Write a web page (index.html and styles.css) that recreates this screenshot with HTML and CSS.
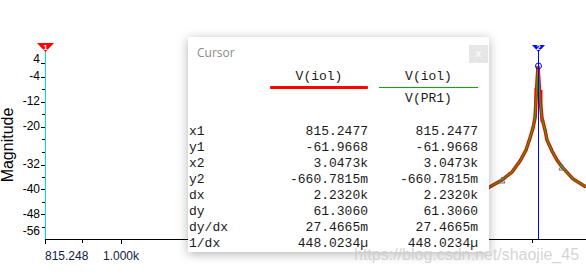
FILE: index.html
```html
<!DOCTYPE html>
<html lang="en">
<head>
    <meta charset="UTF-8">
    <meta name="viewport" content="width=device-width, initial-scale=1.0">
    <title>Cursor</title>
    <link rel="stylesheet" href="styles.css">
</head>
<body>

<div class="scope">
    <svg class="plot" width="586" height="275" viewBox="0 0 586 275">
        <!-- y axis -->
        <text class="axis-title" transform="translate(13,145) rotate(-90)" text-anchor="middle">Magnitude</text>
        <g class="ylabels" text-anchor="end">
            <text x="40" y="63">4</text>
            <text x="40" y="80">-4</text>
            <text x="40" y="105">-12</text>
            <text x="40" y="130">-20</text>
            <text x="40" y="168">-32</text>
            <text x="40" y="193">-40</text>
            <text x="40" y="218">-48</text>
            <text x="40" y="235">-56</text>
        </g>
        <g stroke="#000" stroke-width="1">
            <line x1="41" y1="63.5" x2="45" y2="63.5"/>
            <line x1="41" y1="77.5" x2="45" y2="77.5"/>
            <line x1="42" y1="89.5" x2="45" y2="89.5"/>
            <line x1="41" y1="102.5" x2="45" y2="102.5"/>
            <line x1="42" y1="114.5" x2="45" y2="114.5"/>
            <line x1="41" y1="127.5" x2="45" y2="127.5"/>
            <line x1="42" y1="139.5" x2="45" y2="139.5"/>
            <line x1="42" y1="152.5" x2="45" y2="152.5"/>
            <line x1="41" y1="165.5" x2="45" y2="165.5"/>
            <line x1="42" y1="177.5" x2="45" y2="177.5"/>
            <line x1="41" y1="189.5" x2="45" y2="189.5"/>
            <line x1="42" y1="202.5" x2="45" y2="202.5"/>
            <line x1="41" y1="214.5" x2="45" y2="214.5"/>
            <line x1="42" y1="227.5" x2="45" y2="227.5"/>
            <!-- x axis -->
            <line x1="45" y1="239.5" x2="586" y2="239.5"/>
            <line x1="45.5" y1="239" x2="45.5" y2="244"/>
            <line x1="82.5" y1="239" x2="82.5" y2="243"/>
            <line x1="121.5" y1="239" x2="121.5" y2="244"/>
            <line x1="532.5" y1="239" x2="532.5" y2="243"/>
        </g>
        <g class="xlabels">
            <text x="45" y="260">815.248</text>
            <text x="103" y="260">1.000k</text>
        </g>

        <!-- trace -->
        <polyline class="trace-red" points="486,189 502,180 512,172 520,161 526,150 530,138 533,128 535,118 536,100 537,82 538,66 539,82 540,100 542,118 545,130 547,140 552,151 557,160 562,167 573,179 586,187"/>
        <line class="trace-spike" x1="535.5" y1="88" x2="535.5" y2="118"/>
        <line class="trace-spike" x1="541.5" y1="90" x2="541.5" y2="122"/>
        <polyline class="trace-green" points="486,189 502,180 512,172 520,161 526,150 530,138 533,128 535,118 536,100 537,82 538,66 539,82 540,100 542,118 545,130 547,140 552,151 557,160 562,167 573,179 586,187"/>
        <polygon class="pt" points="499,183 505,183 502,177"/>
        <polygon class="pt" points="559,170 565,170 562,164"/>

        <!-- cursors -->
        <line x1="45.5" y1="50" x2="45.5" y2="239" stroke="#00dede"/>
        <polygon points="37,43 54,43 45.5,52" fill="#f00"/>
        <text class="flag" x="45.5" y="49.5" text-anchor="middle">1</text>

        <line x1="538.5" y1="50" x2="538.5" y2="239" stroke="#00f"/>
        <circle cx="538.5" cy="66" r="3" fill="none" stroke="#00f"/>
        <polygon points="532,45 545,45 538.5,52" fill="#00f"/>
        <text class="flag" x="538.5" y="49.5" text-anchor="middle">2</text>
    </svg>

    <div class="cursor-win">
        <div class="win-head">
            <span class="win-title">Cursor</span>
            <span class="win-close">x</span>
        </div>
        <div class="readout head-row">
            <span></span>
            <div class="trace-col">
                <span>V(iol)</span>
                <span class="bar bar-red"></span>
            </div>
            <div class="trace-col">
                <span>V(iol)</span>
                <span class="bar bar-green"></span>
                <span class="ref">V(PR1)</span>
            </div>
        </div>
        <div class="readout rows">
            <span>x1</span><span class="num">815.2477</span><span class="num">815.2477</span>
            <span>y1</span><span class="num">-61.9668</span><span class="num">-61.9668</span>
            <span>x2</span><span class="num">3.0473k</span><span class="num">3.0473k</span>
            <span>y2</span><span class="num">-660.7815m</span><span class="num">-660.7815m</span>
            <span>dx</span><span class="num">2.2320k</span><span class="num">2.2320k</span>
            <span>dy</span><span class="num">61.3060</span><span class="num">61.3060</span>
            <span>dy/dx</span><span class="num">27.4665m</span><span class="num">27.4665m</span>
            <span>1/dx</span><span class="num">448.0234µ</span><span class="num">448.0234µ</span>
        </div>
    </div>

    <div class="watermark">https://blog.csdn.net/shaojie_45</div>
</div>

</body>
</html>
```

FILE: styles.css
```css
body {
    margin: 0;
    background: #fff;
    font-family: "Liberation Sans", Arial, sans-serif;
}
.scope {
    position: relative;
    width: 586px;
    height: 275px;
    overflow: hidden;
}
.plot {
    display: block;
}
.axis-title {
    font-size: 16px;
    fill: #000;
}
.ylabels text,
.xlabels text {
    font-size: 12px;
    fill: #000;
}
.xlabels text {
    fill: #102040;
}
.trace-red {
    fill: none;
    stroke: #f00;
    stroke-width: 3.5;
}
.trace-spike {
    stroke: #f00;
    stroke-width: 2;
}
.trace-green {
    fill: none;
    stroke: #00c000;
    stroke-width: 1.2;
}
.pt {
    fill: none;
    stroke: #607070;
    stroke-width: 1;
}
.flag {
    font-size: 8px;
    font-weight: bold;
    fill: #fff;
}

/* cursor readout window */
.cursor-win {
    position: absolute;
    left: 188px;
    top: 37px;
    width: 301px;
    height: 215px;
    background: #fff;
    box-shadow: 0 2px 10px rgba(0, 0, 0, 0.3);
}
.win-head {
    display: flex;
    justify-content: space-between;
    align-items: flex-start;
    height: 29px;
}
.win-title {
    margin: 8px 0 0 9px;
    font-family: "Open Sans", "Noto Sans", sans-serif;
    font-size: 12px;
    line-height: 16px;
    color: #8a8a8a;
}
.win-close {
    margin: 8px 1px 0 0;
    width: 19px;
    height: 18px;
    background: #e6e6e6;
    color: #fff;
    font-size: 11px;
    line-height: 17px;
    text-align: center;
}
.readout {
    display: grid;
    grid-template-columns: 70px 98px 99px;
    column-gap: 11px;
    padding-left: 1px;
    font-family: "Liberation Mono", "Courier New", monospace;
    font-size: 13px;
    line-height: 16px;
    color: #1a1a1a;
}
.head-row {
    margin-top: 3px;
}
.trace-col {
    display: flex;
    flex-direction: column;
    align-items: center;
}
.bar {
    align-self: stretch;
}
.bar-red {
    height: 3px;
    margin-top: 1px;
    background: #f00;
    border-radius: 1px;
}
.bar-green {
    height: 1px;
    margin-top: 2px;
    background: #00b000;
}
.ref {
    margin-top: 3px;
}
.rows {
    margin-top: 17px;
}
.num {
    text-align: right;
}
.watermark {
    position: absolute;
    left: 354px;
    top: 246px;
    font-size: 16px;
    color: rgba(205, 205, 205, 0.85);
    white-space: nowrap;
}
```
